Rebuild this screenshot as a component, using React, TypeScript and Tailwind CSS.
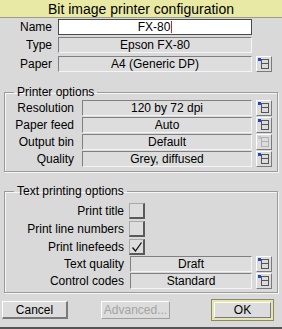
import type { ReactNode } from 'react'

const font = { fontFamily: '"Liberation Sans", Arial, sans-serif' }

function MenuButton({ disabled = false }: { disabled?: boolean }) {
  return (
    <div className="ml-[4px] flex h-[16px] w-[16px] items-center justify-center border-t border-l border-t-white border-l-white border-b border-r border-b-[#7a7a7a] border-r-[#7a7a7a] bg-[#dcdcdc]">
      <svg width="12" height="12" viewBox="0 0 12 12">
        <rect x="0" y="0" width="3" height="3" fill={disabled ? '#b8c4dc' : '#1848d8'} />
        <rect x="3.5" y="1.5" width="7" height="9" fill="none" stroke={disabled ? '#b0b0b0' : '#555'} />
        <line x1="3.5" y1="5.5" x2="10.5" y2="5.5" stroke={disabled ? '#b0b0b0' : '#555'} />
      </svg>
    </div>
  )
}

function Field({ value, width, ml }: { value: string; width: string; ml: string }) {
  return (
    <div
      className={`${width} ${ml} flex h-[16px] items-center justify-center border-t border-l border-t-[#808080] border-l-[#808080] border-b border-r border-b-[#f4f4f4] border-r-[#f4f4f4] bg-[#dddddd] text-[12px] leading-none text-black`}
    >
      {value}
    </div>
  )
}

function Label({ children, width }: { children: ReactNode; width: string }) {
  return <div className={`${width} text-right text-[12px] leading-none text-black`}>{children}</div>
}

function Check({ checked = false }: { checked?: boolean }) {
  return (
    <div className="ml-[5px] flex h-[16px] w-[16px] items-center justify-center border-t border-l border-t-[#a8a8a8] border-l-[#a8a8a8] border-b-2 border-r-2 border-b-[#5a5a5a] border-r-[#5a5a5a] bg-[#dddddd]">
      {checked && (
        <svg width="12" height="12" viewBox="0 0 12 12">
          <path d="M1.5 6.5 L4.5 10 L10.5 1.5" fill="none" stroke="#111" strokeWidth="1.3" />
        </svg>
      )}
    </div>
  )
}

function Group({ title, children, className }: { title: string; children: ReactNode; className: string }) {
  return (
    <fieldset
      className={`mx-[4px] border border-[#9a9a9a] shadow-[inset_1px_1px_0_#f6f6f6,1px_1px_0_#f6f6f6] ${className}`}
    >
      <legend className="ml-[9px] px-[3px] text-[12px] leading-[14px] text-black">{title}</legend>
      {children}
    </fieldset>
  )
}

export default function App() {
  return (
    <div className="flex h-[329px] w-[282px] flex-col border-b-2 border-b-[#555] bg-[#d9d9d9]" style={font}>
      {/* Title bar */}
      <div className="flex h-[18px] items-center justify-center border-b border-b-[#9a9a9a] bg-[#e9e9a6] text-[14px] leading-none text-black">
        Bit image printer configuration
      </div>

      {/* Top fields */}
      <div className="mt-[1px] flex h-[16px] items-center">
        <Label width="w-[52px]">Name</Label>
        <div className="ml-[6px] flex h-[16px] w-[194px] items-center justify-center border border-[#4a4a4a] bg-white text-[12px] leading-none text-black">
          <span>FX-80</span>
          <span className="ml-[1px] inline-block h-[12px] w-[1px] bg-[#d02020]" />
        </div>
      </div>
      <div className="mt-[2px] flex h-[16px] items-center">
        <Label width="w-[52px]">Type</Label>
        <Field value="Epson FX-80" width="w-[194px]" ml="ml-[6px]" />
      </div>
      <div className="mt-[3px] flex h-[16px] items-center">
        <Label width="w-[52px]">Paper</Label>
        <Field value="A4 (Generic DP)" width="w-[194px]" ml="ml-[6px]" />
        <MenuButton />
      </div>

      {/* Printer options */}
      <Group title="Printer options" className="mt-[13px] pb-[4px]">
        <div className="mt-[1px] flex h-[16px] items-center">
          <Label width="w-[69px]">Resolution</Label>
          <Field value="120 by 72 dpi" width="w-[170px]" ml="ml-[8px]" />
          <MenuButton />
        </div>
        <div className="mt-[1px] flex h-[16px] items-center">
          <Label width="w-[69px]">Paper feed</Label>
          <Field value="Auto" width="w-[170px]" ml="ml-[8px]" />
          <MenuButton />
        </div>
        <div className="mt-[1px] flex h-[16px] items-center">
          <Label width="w-[69px]">Output bin</Label>
          <Field value="Default" width="w-[170px]" ml="ml-[8px]" />
          <MenuButton disabled />
        </div>
        <div className="mt-[1px] flex h-[16px] items-center">
          <Label width="w-[69px]">Quality</Label>
          <Field value="Grey, diffused" width="w-[170px]" ml="ml-[8px]" />
          <MenuButton />
        </div>
      </Group>

      {/* Text printing options */}
      <Group title="Text printing options" className="mt-[12px] pb-[3px]">
        <div className="mt-[5px] flex h-[16px] items-center">
          <Label width="w-[119px]">Print title</Label>
          <Check />
        </div>
        <div className="mt-[2px] flex h-[16px] items-center">
          <Label width="w-[119px]">Print line numbers</Label>
          <Check />
        </div>
        <div className="mt-[2px] flex h-[16px] items-center">
          <Label width="w-[119px]">Print linefeeds</Label>
          <Check checked />
        </div>
        <div className="mt-[1px] flex h-[16px] items-center">
          <Label width="w-[119px]">Text quality</Label>
          <Field value="Draft" width="w-[122px]" ml="ml-[6px]" />
          <MenuButton />
        </div>
        <div className="mt-[1px] flex h-[16px] items-center">
          <Label width="w-[119px]">Control codes</Label>
          <Field value="Standard" width="w-[122px]" ml="ml-[6px]" />
          <MenuButton />
        </div>
      </Group>

      {/* Buttons */}
      <div className="mt-[6px] flex items-center">
        <button className="ml-[2px] flex h-[18px] w-[66px] items-center justify-center border-t border-l border-t-white border-l-white border-b-2 border-r-2 border-b-[#7a7a7a] border-r-[#7a7a7a] bg-[#dcdcdc] text-[12px] leading-none text-black">
          Cancel
        </button>
        <button className="ml-[33px] flex h-[18px] w-[69px] items-center justify-center border-t border-l border-t-white border-l-white border-b border-r border-b-[#a0a0a0] border-r-[#a0a0a0] bg-[#dcdcdc] text-[12px] leading-none text-[#a4a4a4]">
          Advanced...
        </button>
        <div className="ml-[41px] border border-[#8a8a6a] bg-[#e6e6b0] p-[2px]">
          <button className="flex h-[16px] w-[57px] items-center justify-center border-t border-l border-t-white border-l-white border-b border-r border-b-[#7a7a7a] border-r-[#7a7a7a] bg-[#dcdcdc] text-[12px] leading-none text-black">
            OK
          </button>
        </div>
      </div>
    </div>
  )
}
